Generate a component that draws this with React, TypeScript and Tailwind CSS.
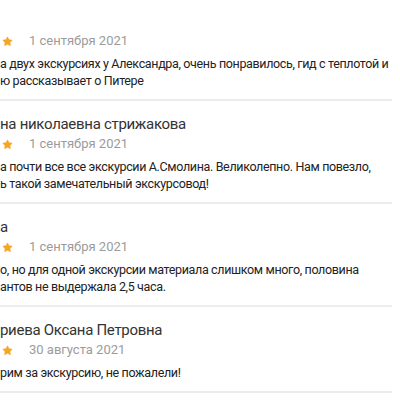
import { Star } from "lucide-react";

interface Review {
  name: string;
  date: string;
  lines: string[];
}

const reviews: Review[] = [
  {
    name: "\u00a0",
    date: "1 сентября 2021",
    lines: [
      "а двух экскурсиях у Александра, очень понравилось, гид с теплотой и",
      "ю рассказывает о Питере",
    ],
  },
  {
    name: "на николаевна стрижакова",
    date: "1 сентября 2021",
    lines: [
      "а почти все все экскурсии А.Смолина. Великолепно. Нам повезло,",
      "ь такой замечательный экскурсовод!",
    ],
  },
  {
    name: "а",
    date: "1 сентября 2021",
    lines: [
      "о, но для одной экскурсии материала слишком много, половина",
      "антов не выдержала 2,5 часа.",
    ],
  },
  {
    name: "риева Оксана Петровна",
    date: "30 августа 2021",
    lines: ["рим за экскурсию, не пожалели!"],
  },
];

function Stars() {
  return (
    <div className="flex gap-[3px] -ml-[54px]">
      {[0, 1, 2, 3, 4].map((i) => (
        <Star key={i} size={11} className="text-[#f5a623]" fill="#f5a623" strokeWidth={1} />
      ))}
    </div>
  );
}

function ReviewItem({ review }: { review: Review }) {
  return (
    <div className="border-b-2 border-[#ececec] pt-[13px] pb-[10px]">
      <div className="text-[15px] leading-[20px] tracking-[-0.3px] text-[#333] whitespace-nowrap">
        {review.name}
      </div>
      <div className="flex items-center h-[20px]">
        <Stars />
        <span className="ml-4 text-[13px] text-[#9b9b9b]">{review.date}</span>
      </div>
      <div className="mt-[4px] text-[12.5px] leading-[17px] tracking-[-0.35px] text-[#222]">
        {review.lines.map((l, i) => (
          <div key={i} className="whitespace-nowrap">
            {l}
          </div>
        ))}
      </div>
    </div>
  );
}

export default function App() {
  return (
    <div
      className="w-[400px] h-[400px] overflow-hidden bg-white"
      style={{ fontFamily: "Roboto, 'Noto Sans', sans-serif" }}
    >
      <div className="w-[392px] -mt-[2px]">
        {reviews.map((r, i) => (
          <ReviewItem key={i} review={r} />
        ))}
      </div>
    </div>
  );
}
